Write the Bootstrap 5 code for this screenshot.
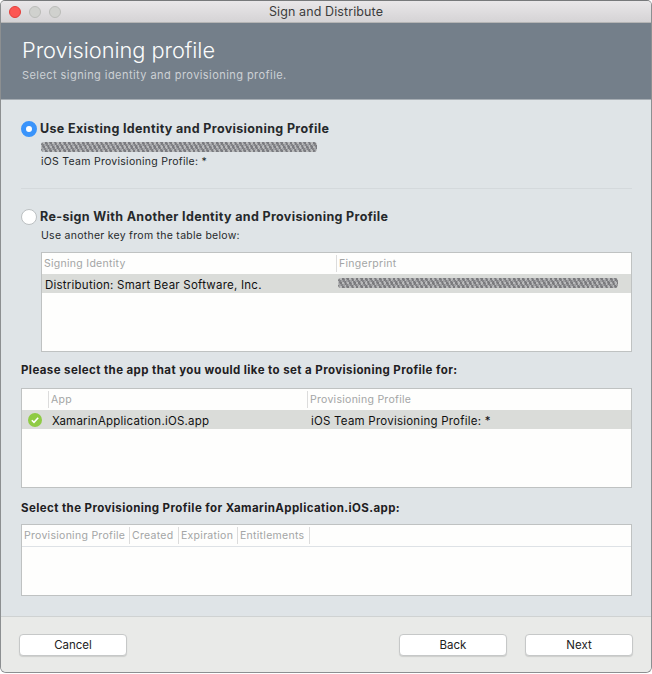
<!DOCTYPE html>
<html lang="en">
<head>
<meta charset="utf-8">
<title>Sign and Distribute</title>
<link rel="stylesheet" href="https://cdn.jsdelivr.net/npm/bootstrap@5.3.0/dist/css/bootstrap.min.css">
<style>
html,body{margin:0;height:674px;background:#fff;overflow:hidden}
body{font-family:Inter,"Liberation Sans",sans-serif;color:#222;font-size:11px}
.win{width:652px;height:673px;border:1px solid #8c8f91;border-top-color:#77797b;border-radius:5px 5px 6px 6px;overflow:hidden;background:#dfe4e7}
.tbar{height:22px;background:linear-gradient(#e9e7e9,#d5d3d5);border-bottom:1px solid #b5b5b5;position:relative}
.tbar-title{font-size:12.5px;color:#3c3c3c;line-height:22px;letter-spacing:.1px}
.lights{position:absolute;left:8px;top:5px}
.light{width:12px;height:12px;border-radius:50%;background:#d0d1ce;border:1px solid #bbbcb9}
.light-red{background:#fc5753;border-color:#e33e3a}
.hero{height:77px;background:#747f8a;color:#fff;padding:12px 21px 0;border-bottom:1px solid #a6adb3}
.hero-title{font-size:21.8px;font-weight:300;line-height:30px;color:#fbfcfc;letter-spacing:-.05px}
.hero-sub{font-size:11px;line-height:14px;color:#cdd1d5;margin-top:3px;letter-spacing:.44px}
.body-pane{height:516px;padding:20px 20px 0;background:#dfe4e7}
.opt-head{height:17px;gap:3px}
.rad{width:16px;height:16px;border-radius:50%;flex:none;background:#fff;border:1px solid #bcc0c2}
.rad-on{background:#fff;border:5px solid #3a94fb}
.opt-label{font-weight:700;font-size:12.5px;color:#26292b;letter-spacing:.35px;line-height:17px}
.sub-pane{padding-left:20px}
.scribble{height:10px;width:276px;margin-top:5px;border-radius:3px;background:repeating-linear-gradient(60deg,rgba(90,90,95,.55) 0 2px,transparent 2px 4px),repeating-linear-gradient(120deg,rgba(120,120,125,.6) 0 2px,#b9babb 2px 4px);filter:blur(.6px)}
.note{font-size:10.5px;line-height:14px;color:#26292b;letter-spacing:.27px}
.note-first{margin-top:3px}
.rule{border-top:1px solid #d4d9dc;margin:19px 0 19px 0;width:611px}
.tbl{background:#fefefd;border:1px solid #bfc2c2;overflow:hidden}
.tbl-head{height:21px;padding-top:2px;color:#a3a5a5;font-size:10.5px;line-height:17px;letter-spacing:.28px}
.hcell{border-right:1px solid #dcdcdc;padding-left:2px;height:17px;white-space:nowrap;flex:none}
.tbl-row{height:19px;background:#dadcd9;font-size:11.5px;line-height:23px;color:#111;letter-spacing:.23px}
.rcell{flex:none;white-space:nowrap}
.sect{font-weight:700;font-size:11.5px;color:#1e2022;letter-spacing:.41px;line-height:14px}
.foot{height:56px;background:#e9eae8;border-top:1px solid #cfd2d2;padding:17px 18px 0}
.mbtn{width:108px;height:22px;padding:0;background:#fff;border:1px solid #c6c8c8;border-radius:4px;font-size:11.5px;line-height:20px;color:#222;box-shadow:0 1px 1px rgba(0,0,0,.12)}
.blank-1{height:58px}
.blank-2{height:58px}
.blank-3{height:48px}
.gap-tbl-1{width:591px;margin-top:9px}
.sect-1{margin-top:11px}
.sect-2{margin-top:13px}
.full-1{width:611px;margin-top:11px}
.full-2{width:611px;margin-top:9px}
</style>
</head>
<body>
<div class="win">
  <div class="tbar text-center">
    <div class="lights d-flex gap-2">
      <div class="light light-red"></div><div class="light"></div><div class="light"></div>
    </div>
    <div class="tbar-title">Sign and Distribute</div>
  </div>
  <div class="hero">
    <div class="hero-title">Provisioning profile</div>
    <div class="hero-sub">Select signing identity and provisioning profile.</div>
  </div>
  <div class="body-pane">
    <div class="d-flex align-items-center opt-head"><span class="rad rad-on"></span><span class="opt-label">Use Existing Identity and Provisioning Profile</span></div>
    <div class="sub-pane">
      <div class="scribble"></div>
      <div class="note note-first">iOS Team Provisioning Profile: *</div>
    </div>
    <div class="rule"></div>
    <div class="d-flex align-items-center opt-head"><span class="rad"></span><span class="opt-label">Re-sign With Another Identity and Provisioning Profile</span></div>
    <div class="sub-pane">
      <div class="note mt-1">Use another key from the table below:</div>
      <div class="tbl gap-tbl-1">
        <div class="tbl-head d-flex"><div class="hcell" style="width:295px">Signing Identity</div><div class="hcell" style="width:295px;border:0">Fingerprint</div></div>
        <div class="tbl-row d-flex"><div class="rcell" style="width:296px;padding-left:3px">Distribution: Smart Bear Software, Inc.</div><div class="scribble rcell" style="margin-top:4px;width:280px"></div></div>
        <div class="blank-1"></div>
      </div>
    </div>
    <div class="sect sect-1">Please select the app that you would like to set a Provisioning Profile for:</div>
    <div class="tbl full-1">
      <div class="tbl-head d-flex"><div class="hcell" style="width:27px"></div><div class="hcell" style="width:259px">App</div><div class="hcell" style="width:324px;border:0">Provisioning Profile</div></div>
      <div class="tbl-row d-flex">
        <div class="rcell d-flex align-items-center" style="width:30px;padding-left:6px">
          <svg width="14" height="14" viewBox="0 0 14 14"><circle cx="7" cy="7" r="7" fill="#8fcb44"/><path d="M3.8 7.2 6 9.4 10.2 4.8" fill="none" stroke="#fff" stroke-width="1.6"/></svg>
        </div>
        <div class="rcell" style="width:259px">XamarinApplication.iOS.app</div>
        <div class="rcell">iOS Team Provisioning Profile: *</div>
      </div>
      <div class="blank-2"></div>
    </div>
    <div class="sect sect-2">Select the Provisioning Profile for XamarinApplication.iOS.app:</div>
    <div class="tbl full-2">
      <div class="tbl-head d-flex border-bottom" style="height:22px"><div class="hcell" style="width:108px">Provisioning Profile</div><div class="hcell" style="width:49px">Created</div><div class="hcell" style="width:59px">Expiration</div><div class="hcell" style="width:72px">Entitlements</div></div>
      <div class="blank-3"></div>
    </div>
  </div>
  <div class="foot d-flex justify-content-between">
    <button type="button" class="btn mbtn">Cancel</button>
    <div class="d-flex" style="gap:18px">
      <button type="button" class="btn mbtn">Back</button>
      <button type="button" class="btn mbtn">Next</button>
    </div>
  </div>
</div>
<script src="https://cdn.jsdelivr.net/npm/bootstrap@5.3.0/dist/js/bootstrap.bundle.min.js"></script>
</body>
</html>
